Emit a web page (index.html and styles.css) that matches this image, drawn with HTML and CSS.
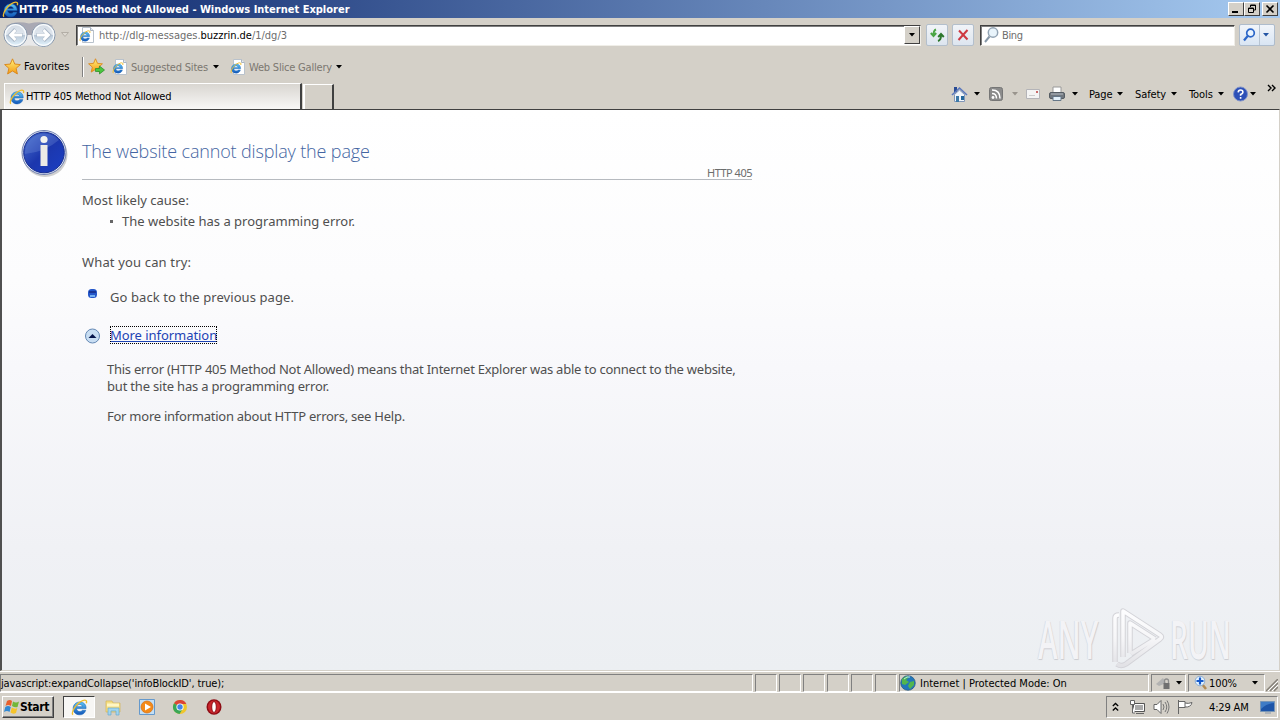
FILE: index.html
```html
<!DOCTYPE html>
<html lang="en">

<head>
    <meta charset="utf-8">
    <title>HTTP 405 Method Not Allowed</title>
    <link rel="stylesheet" href="styles.css">
</head>

<body>
    <!-- Shared icons -->
    <svg class="defs" width="0" height="0">
        <defs>
            <linearGradient id="blue" x2="0" y2="1">
                <stop stop-color="#5cc3f5" />
                <stop offset="1" stop-color="#1256b8" />
            </linearGradient>
            <linearGradient id="orb" x2="0" y2="1">
                <stop stop-color="#d3dbe4" />
                <stop offset=".48" stop-color="#dfe6ee" />
                <stop offset=".52" stop-color="#b9c8d8" />
                <stop offset="1" stop-color="#e6f6ff" />
            </linearGradient>
            <linearGradient id="gold" x2="0" y2="1">
                <stop stop-color="#fff27c" />
                <stop offset="1" stop-color="#f49a12" />
            </linearGradient>
            <linearGradient id="info" x2="1" y2="1">
                <stop stop-color="#4a72cf" />
                <stop offset=".5" stop-color="#1c37ad" />
                <stop offset="1" stop-color="#1b3fc4" />
            </linearGradient>
            <linearGradient id="mark" x2="0" y2="1">
                <stop stop-color="#fdfdfe" />
                <stop offset=".5" stop-color="#f6f6f8" />
                <stop offset="1" stop-color="#e2e2e6" />
            </linearGradient>
            <symbol id="ie" viewBox="0 0 16 16">
                <path d="M14.200 9H5.200c.2 2 1.400 2.800 3 2.800 1.200 0 2-.4 2.500-1.200h3.200C13 13.500 10.900 14.900 8.300 14.900 4.400 14.900 2 12.300 2 8.900S4.600 2.800 8.300 2.800s6.100 2.500 5.900 6.200zM5.300 7.200h5.400C10.500 5.900 9.500 5.200 8.100 5.200S5.600 5.900 5.300 7.200z" fill="url(#blue)" stroke="#1763b5" stroke-width=".5" />
                <path d="M1.800 14.800C-.2 12.500 5 4 11 1.500c3-1.100 4.200 0 3.400 2.500" fill="none" stroke="#f0bd2c" stroke-width="1.300" />
            </symbol>
            <symbol id="iepage" viewBox="0 0 16 16">
                <path d="M3.500.5h8l3 3v12h-11z" fill="#fff" stroke="#b9c2cc" />
                <path d="M11.500.5v3h3" fill="#e4eaf2" stroke="#aab4c0" />
                <use href="#ie" x="0" y="3" width="12" height="12" />
            </symbol>
            <symbol id="star" viewBox="0 0 16 16">
                <path d="M8 .8l2.100 4.900 5.300.5-4 3.500 1.200 5.300L8 12.200 3.400 15l1.200-5.300-4-3.500 5.300-.5z" fill="url(#gold)" stroke="#d9861b" stroke-width=".9" />
            </symbol>
            <symbol id="down" viewBox="0 0 7 4">
                <path d="M0 0h6L3 3.400z" fill="currentColor" />
            </symbol>
        </defs>
    </svg>

    <div class="window">
        <!-- Title bar -->
        <div class="titlebar">
            <svg class="title-icon"><use href="#ie" /></svg>
            <span class="title-text">HTTP 405 Method Not Allowed - Windows Internet Explorer</span>
            <div class="win-btn"><svg width="12" height="10"><path d="M2 7h6v2H2z" /></svg></div>
            <div class="win-btn"><svg width="12" height="10"><path d="M4.500 1h5v5H8M4.500 1v2M4 1.500h6" fill="none" stroke="#000" /><path d="M2.500 4h5v4.500h-5zM2 4.500h6" fill="none" stroke="#000" /></svg></div>
            <div class="win-btn close"><svg width="12" height="10"><path d="M2.500 1.500l7 7M9.500 1.500l-7 7" stroke="#000" stroke-width="1.600" /></svg></div>
        </div>

        <!-- Address row -->
        <div class="navbar">
            <svg class="orbs" width="58" height="28" viewBox="0 0 58 28">
                <path d="M6 5Q15-1 29 2.500 44-1 53 5L43 14H15z" fill="#a9a9b4" />
                <path d="M15 14h28v12Q29 23 15 26z" fill="#e9e9ea" />
                <g fill="url(#orb)" stroke="#8393a8">
                    <circle cx="15.500" cy="14" r="11.500" />
                    <circle cx="43.500" cy="14" r="11.500" />
                </g>
                <g fill="none" stroke="#f8fbfd" stroke-width="1.200">
                    <circle cx="15.500" cy="14" r="10.300" />
                    <circle cx="43.500" cy="14" r="10.300" />
                </g>
                <g fill="none" stroke="#a9b7c6" stroke-width="4">
                    <path d="M22.500 14H10M15.500 8.500L10 14l5.500 5.500" />
                    <path d="M36.500 14H49M43.500 8.500L49 14l-5.500 5.500" />
                </g>
                <g fill="none" stroke="#fff" stroke-width="2.800">
                    <path d="M22 14H10M15.500 9l-5 5 5 5" />
                    <path d="M37 14h12M43.500 9l5 5-5 5" />
                </g>
            </svg>
            <svg class="history" width="10" height="6"><path d="M1.500.5h7L5 4.500z" fill="#ddd9d2" stroke="#b3aea6" /></svg>
            <div class="address">
                <svg class="page-icon"><use href="#iepage" /></svg>
                <span class="url">http://dlg-messages.<b>buzzrin.de</b>/1/dg/3</span>
                <div class="drop-btn"><svg class="arrow"><use href="#down" /></svg></div>
            </div>
            <div class="tool-btn refresh">
                <svg width="16" height="16"><path d="M7 2.500Q4.500 3.500 4.500 8M1.800 6L4.500 9l2.700-3" fill="none" stroke="#4aa545" stroke-width="1.900" /><path d="M9 14q3-1 3-5.500M9.200 10L12 7l2.800 3" fill="none" stroke="#2c772c" stroke-width="1.900" /></svg>
            </div>
            <div class="tool-btn stop">
                <svg width="16" height="16"><path d="M4 3.500l8.500 9M12.500 3l-9 10" stroke="#ce3942" stroke-width="2" /></svg>
            </div>
            <div class="search">
                <svg width="18" height="18"><circle cx="10" cy="6.500" r="4.700" fill="#e9f4fb" stroke="#93a4b4" stroke-width="1.500" /><path d="M6.500 10.500L2 16" stroke="#8798a8" stroke-width="2" /></svg>
                <span>Bing</span>
            </div>
            <div class="search-btn">
                <div class="glass"><svg width="16" height="16"><circle cx="9.500" cy="6" r="3.800" fill="#e9f4ff" stroke="#2b66c8" stroke-width="1.700" /><path d="M6.700 9L3 13.500" stroke="#2b66c8" stroke-width="2.200" /></svg></div>
                <svg class="arrow"><use href="#down" /></svg>
            </div>
        </div>

        <!-- Favorites bar -->
        <div class="favbar">
            <svg class="i17"><use href="#star" /></svg>
            <span class="fav-label">Favorites</span>
            <i class="sep"></i>
            <svg class="i17" viewBox="0 0 17 17"><use href="#star" width="15" height="15" /><path d="M7.500 10.500h4V8l5 4-5 4v-2.500h-4z" fill="#4bc63f" stroke="#248924" stroke-width=".7" /></svg>
            <svg class="i16"><use href="#iepage" /></svg>
            <span class="suggested">Suggested Sites</span>
            <svg class="arrow"><use href="#down" /></svg>
            <svg class="i16 slice"><use href="#iepage" /></svg>
            <span class="gallery">Web Slice Gallery</span>
            <svg class="arrow"><use href="#down" /></svg>
        </div>

        <!-- Tabs and command bar -->
        <div class="tabbar">
            <div class="tab">
                <svg class="i16"><use href="#ie" /></svg>
                <span>HTTP 405 Method Not Allowed</span>
            </div>
            <div class="new-tab"></div>
            <div class="commands">
                <div class="cmd home">
                    <svg width="17" height="17"><path d="M3 1h3v5H3z" fill="#284a93" /><path d="M3.500 8.500L8.500 4l5 4.500v7h-10z" fill="#f2f6fb" stroke="#8297b8" /><path d="M1 9l7.500-7L16 9" fill="none" stroke="#5a78bd" stroke-width="1.600" /><path d="M5 10h3v6H5z" fill="#3d79a8" /><path d="M10 10h3v4h-3z" fill="#24679c" /></svg>
                    <svg class="arrow"><use href="#down" /></svg>
                </div>
                <div class="cmd feeds">
                    <svg width="15" height="15"><rect x=".5" y=".5" width="13" height="13" rx="2" fill="#8b8b8b" stroke="#767676" /><circle cx="4" cy="10.500" r="1.400" fill="#fff" /><path d="M3 6.500q4.500 0 4.500 5M3 3q8 0 8 8.500" fill="none" stroke="#fff" stroke-width="1.500" /></svg>
                    <svg class="arrow"><use href="#down" /></svg>
                </div>
                <div class="cmd mail">
                    <svg width="15" height="11"><path d="M.5.500h13v9H.5z" fill="#f4f4f4" stroke="#b4b4b8" /><path d="M10 2h2v2h-2z" fill="#c96a6a" /><path d="M3 6.500h6" stroke="#ccc" /></svg>
                </div>
                <div class="cmd print">
                    <svg width="17" height="16"><path d="M4 1h8v6H4z" fill="#fff" stroke="#999" /><rect x=".5" y="6.500" width="15" height="6" rx="1.500" fill="#71777e" stroke="#555c63" /><path d="M2 8h12" stroke="#b7bdc3" /><path d="M4 10.500h8v4H4z" fill="#e4f1fa" stroke="#678" /></svg>
                    <svg class="arrow"><use href="#down" /></svg>
                </div>
                <div class="cmd page"><span>Page</span><svg class="arrow"><use href="#down" /></svg></div>
                <div class="cmd safety"><span>Safety</span><svg class="arrow"><use href="#down" /></svg></div>
                <div class="cmd tools"><span>Tools</span><svg class="arrow"><use href="#down" /></svg></div>
                <div class="cmd help">
                    <svg width="16" height="16"><circle cx="7.500" cy="8" r="7" fill="#2d50b7" stroke="#7f92ca" /><path d="M5.200 6.400Q5.300 4 7.600 4t2.300 2.200Q9.900 7.500 7.600 8.500v1.300M7.600 11v1.700" fill="none" stroke="#fff" stroke-width="1.600" /></svg>
                    <svg class="arrow"><use href="#down" /></svg>
                </div>
                <svg class="more" width="10" height="8"><path d="M1 1l3 3-3 3M5 1l3 3-3 3" fill="none" stroke="#000" stroke-width="1.400" /></svg>
            </div>
        </div>

        <!-- Error page -->
        <div class="viewport">
            <svg class="info-icon" width="48" height="50" viewBox="0 0 48 50">
                <circle cx="24" cy="25.500" r="22.500" fill="#999" opacity=".45" />
                <circle cx="23" cy="23.500" r="22" fill="#dfe5f3" stroke="#6f7fae" />
                <circle cx="23" cy="23.500" r="20.300" fill="url(#info)" stroke="#162d90" />
                <path d="M4 25A19.500 19.500 0 0 1 38 11Q24 23 4 25z" fill="#88a5e4" opacity=".25" />
                <circle cx="23" cy="10.500" r="3.600" fill="#f3f3f0" />
                <path d="M19.500 16h7v21h-7z" fill="#eceae6" />
            </svg>
            <div class="error">
                <h1>The website cannot display the page</h1>
                <div class="code">HTTP 405</div>
                <p class="cause">Most likely cause:</p>
                <ul>
                    <li>The website has a programming error.</li>
                </ul>
                <p class="try">What you can try:</p>
                <div class="task">
                    <svg width="28" height="12"><rect x="6" y="1" width="9" height="9" rx="3.500" fill="#2457c9" /><path d="M7 4h7" stroke="#183494" stroke-width="2" /><path d="M8 8h5" stroke="#75b1f2" stroke-width="2" /></svg>
                    <span>Go back to the previous page.</span>
                </div>
                <div class="task info">
                    <svg width="28" height="18"><circle cx="10.500" cy="10" r="7" fill="#c9def3" stroke="#6488b4" /><path d="M6.500 12l4-4 4 4z" fill="#07154b" /></svg>
                    <a href="#">More information</a>
                </div>
                <div class="details">
                    <p class="line1">This error (HTTP 405 Method Not Allowed) means that Internet Explorer was able to connect to the website,</p>
                    <p class="line2">but the site has a programming error.</p>
                    <p class="line3">For more information about HTTP errors, see Help.</p>
                </div>
            </div>
            <!-- Watermark -->
            <div class="watermark">
                <span class="any">ANY</span>
                <svg width="58" height="64" viewBox="0 0 58 64">
                    <g fill="none" stroke-linejoin="round">
                        <path d="M7 55V11q0-3 4-3M15 50V4l37 24q3 2 0 4L18 57q-5 3-9 0M22 46V16l25 16M23 47l24-15" stroke="#d3d3d8" stroke-width="5.500" />
                        <path d="M7 55V11q0-3 4-3M15 50V4l37 24q3 2 0 4L18 57q-5 3-9 0M22 46V16l25 16M23 47l24-15" stroke="url(#mark)" stroke-width="3.500" />
                    </g>
                </svg>
                <span class="run">RUN</span>
            </div>
        </div>

        <!-- Status bar -->
        <div class="statusbar">
            <div class="pane msg"><span>javascript:expandCollapse('infoBlockID', true);</span></div>
            <div class="pane small"></div>
            <div class="pane small"></div>
            <div class="pane small"></div>
            <div class="pane small"></div>
            <div class="pane small"></div>
            <div class="pane small"></div>
            <div class="pane zone">
                <svg width="16" height="16"><circle cx="8" cy="8" r="7.300" fill="#2277ba" stroke="#28567d" stroke-width=".7" /><path d="M2 4q4-4 7-2L6 5l3 2-4 3-3-1zM10 7l4-1v4l-4 4-2-3z" fill="#52b64d" /><path d="M4 4q3-3 6-2" stroke="#b5e9f5" fill="none" /></svg>
                <span>Internet | Protected Mode: On</span>
            </div>
            <div class="pane lock">
                <svg width="17" height="16"><path d="M1 9l7-6 3 5-7 3z" fill="#b2b2b2" /><path d="M8.500 8h6v6h-6z" fill="#707070" /><path d="M9.500 8V6q0-2 2-2t2 2v2" fill="none" stroke="#8d8d8d" stroke-width="1.300" /></svg>
                <svg class="arrow"><use href="#down" /></svg>
            </div>
            <div class="pane zoom">
                <svg width="15" height="16"><path d="M8 9l4 5" stroke="#b38b54" stroke-width="2.500" /><circle cx="6" cy="6" r="4.800" fill="#e3f2ff" stroke="#8bacd0" /><path d="M6 2.500v7M2.500 6h7" stroke="#1559cb" stroke-width="2.200" /></svg>
                <span>100%</span>
                <svg class="arrow"><use href="#down" /></svg>
            </div>
            <svg class="grip" width="12" height="13"><path d="M0 12L12 0M4 12l8-8M8 12l4-4" stroke="#858078" stroke-width="1.500" /><path d="M2 12L12 2M6 12l6-6" stroke="#fff" /></svg>
        </div>

        <!-- Taskbar -->
        <div class="taskbar">
            <div class="start">
                <svg width="16" height="16"><path d="M3 2q3-2 5 0L7 7Q4 5 1.500 7z" fill="#e7602d" /><path d="M9 2.500q3 2 6 0L13.500 8Q11 9 8 7z" fill="#72b73a" /><path d="M1.300 8Q4 6 6.800 8L5.500 13Q3 11 0 13z" fill="#3189d3" /><path d="M7.800 8.500q3 2 5.500.5L12 14q-3 1.500-5.500-.5z" fill="#f6c42a" /></svg>
                <span>Start</span>
            </div>
            <div class="task-active"><svg width="17" height="17"><use href="#ie" /></svg></div>
            <svg class="launch" viewBox="0 0 17 17"><path d="M1 2h6l1 2h7v9H1z" fill="#f4dd83" stroke="#d4b653" stroke-width=".7" /><path d="M2 4.500h12v3H2z" fill="#fff6c4" /><path d="M3 16V9h11v7h-3v-4H6v4z" fill="#a0d5ef" stroke="#6ba9cd" stroke-width=".7" /></svg>
            <svg class="launch" viewBox="0 0 17 17"><path d="M.500.500h15v15H.5z" fill="#c3dff5" stroke="#6599cc" /><circle cx="8" cy="8" r="6" fill="#f48a18" stroke="#d56d10" stroke-width=".7" /><path d="M6 4.500l6 3.500-6 3.500z" fill="#fff" /></svg>
            <svg class="launch" viewBox="0 0 17 17"><circle cx="8" cy="8" r="7" fill="#efc62c" /><path d="M8 8L2 4.300A7 7 0 0 1 14.300 5H8z" fill="#db4437" /><path d="M2 4.300A7 7 0 0 0 7.500 15L11 9.500 8 8z" fill="#3aa757" /><circle cx="8" cy="8" r="3.600" fill="#fff" /><circle cx="8" cy="8" r="2.700" fill="#4285e8" /></svg>
            <svg class="launch" viewBox="0 0 17 17"><ellipse cx="8" cy="8" rx="7.500" ry="7.700" fill="#8e0c14" /><ellipse cx="8" cy="8" rx="6" ry="6.500" fill="#c9252b" /><ellipse cx="8" cy="8" rx="2.300" ry="5.500" fill="#fff" stroke="#900d14" /></svg>
            <div class="tray">
                <svg class="up" width="7" height="10"><path d="M.8 4L3.500 1.500 6.200 4M.8 8.500L3.500 6l2.700 2.500" fill="none" stroke="#000" stroke-width="1.300" /></svg>
                <svg class="net" width="17" height="16"><path d="M4.500 4.500h11v8h-11z" fill="#aaa" stroke="#555" /><path d="M5.500 5.500h9v6h-9z" fill="none" stroke="#fff" /><path d="M7 14.500h8" stroke="#666" /><path d="M1.500 1.500h4v4h-4zM3.500 6v8H6" fill="#fff" stroke="#666" /></svg>
                <svg class="vol" width="17" height="16"><path d="M1 5.500h3l4-4v13l-4-4H1z" fill="#fff" stroke="#666" /><path d="M10 5q2 3 0 6M12 3q3.500 5 0 10M14 1.500q4 6.500 0 13" fill="none" stroke="#777" /></svg>
                <svg class="flag" width="17" height="16"><path d="M1.500 1v14M2 2.500h6v6H2M8 4q3 1 7-.5-1 5-7 4.500" fill="#fff" stroke="#666" /></svg>
                <span class="clock">4:29 AM</span>
                <svg class="desk" width="16" height="14"><path d="M.500 1.500h14v10H.5z" fill="#1d55a8" stroke="#7896b6" /><path d="M1 9Q7 3 14 3V2H1z" fill="#3f7cc6" /><path d="M5 13h6" stroke="#8897aa" /></svg>
            </div>
        </div>
    </div>
</body>

</html>
```
FILE: styles.css
```css
/* Base */
* {
    box-sizing: border-box;
}
body {
    margin: 0;
    overflow: hidden;
    background: #d4d0c8;
    color: #000;
    font-family: "DejaVu Sans Condensed", "DejaVu Sans", sans-serif;
    font-size: 11px;
    font-stretch: condensed;
    letter-spacing: -0.35px;
}
svg {
    display: block;
    flex: none;
}
span {
    white-space: nowrap;
}
.defs {
    position: absolute;
}
.window {
    display: flex;
    flex-direction: column;
    width: 1280px;
    height: 720px;
}
.arrow {
    width: 7px;
    height: 4px;
}
.i16 {
    width: 16px;
    height: 16px;
}
.i17 {
    width: 17px;
    height: 17px;
}

/* Title bar */
.titlebar {
    display: flex;
    align-items: center;
    height: 18px;
    padding-right: 2px;
    background: linear-gradient(to right, #0a246a, #a6caf0);
    color: #fff;
}
.title-icon {
    width: 17px;
    height: 17px;
    margin-left: 2px;
}
.title-text {
    flex: 1;
    font-weight: bold;
    letter-spacing: 0;
}
.win-btn {
    width: 16px;
    height: 14px;
    padding: 1px;
    background: #d4d0c8;
    border: 1px solid;
    border-color: #fff #404040 #404040 #fff;
}
.win-btn.close {
    margin-left: 2px;
}

/* Address row */
.navbar {
    display: flex;
    align-items: center;
    height: 34px;
}
.orbs {
    width: 58px;
}
.history {
    margin: 0 8px 0 2px;
}
.address,
.search {
    display: flex;
    align-items: center;
    height: 21px;
    background: #fff;
    border: 1px solid;
    border-color: #404040 #f0eee8 #f0eee8 #404040;
    box-shadow: inset 1px 1px #808080;
    color: #6d6d6d;
}
.address {
    width: 845px;
    margin-left: -2px;
}
.page-icon {
    width: 16px;
    height: 16px;
    margin: 0 4px 0 2px;
}
.url {
    flex: 1;
    padding-top: 1px;
    letter-spacing: -0.02px;
}
.url b {
    color: #000;
    font-weight: normal;
}
.drop-btn {
    display: flex;
    align-items: center;
    justify-content: center;
    width: 16px;
    height: 18px;
    background: #d4d0c8;
    border: 1px solid;
    border-color: #fff #404040 #404040 #fff;
    color: #000;
}
.tool-btn {
    display: flex;
    align-items: center;
    justify-content: center;
    width: 22px;
    height: 22px;
    margin-left: 5px;
    background: linear-gradient(#f1f4f8, #dde5ef);
    border: 1px solid #b3bfcc;
    border-radius: 2px;
}
.stop {
    margin-left: 4px;
}
.search {
    width: 255px;
    margin-left: 6px;
    padding-left: 2px;
}
.search svg {
    margin-right: 1px;
}
.search span {
    padding-top: 1px;
}
.search-btn {
    display: flex;
    align-items: center;
    width: 36px;
    height: 22px;
    margin-left: 4px;
    background: linear-gradient(#f1f5fa, #d9e5f3);
    border: 1px solid #aebccc;
    border-radius: 2px;
    color: #2355a4;
}
.glass {
    padding: 2px 2px 2px 1px;
    margin-right: 3px;
    border-right: 1px solid #b8c5d3;
}

/* Favorites bar */
.favbar {
    display: flex;
    align-items: center;
    height: 29px;
    padding-left: 4px;
}
.fav-label {
    width: 59px;
    padding-left: 3px;
    letter-spacing: 0.1px;
}
.sep {
    width: 2px;
    height: 20px;
    margin: 0 4px 0 2px;
    border-left: 1px solid #808080;
    border-right: 1px solid #fff;
}
.favbar .i16 {
    margin: 0 3px 0 7px;
}
.favbar .i16.slice {
    margin-left: 10px;
}
.suggested,
.gallery {
    width: 82px;
    padding-top: 1px;
    color: #7b7770;
    letter-spacing: -0.2px;
}
.gallery {
    width: 87px;
}

/* Tabs and command bar */
.tabbar {
    display: flex;
    align-items: flex-end;
    height: 28px;
    padding-left: 4px;
}
.tab {
    display: flex;
    align-items: center;
    width: 298px;
    height: 26px;
    padding-left: 4px;
    background: linear-gradient(#d9d6d1, #f8f7f6);
    border-top: 1px solid #fff;
    border-left: 1px solid #fff;
    border-right: 2px solid #404040;
}
.tab span {
    padding-left: 1px;
    letter-spacing: -0.17px;
}
.new-tab {
    width: 31px;
    height: 25px;
    margin-left: 1px;
    border-top: 1px solid #fff;
    border-left: 2px solid #fff;
    border-right: 2px solid #404040;
}
.commands {
    display: flex;
    align-items: center;
    height: 30px;
    margin-left: 617px;
}
.cmd {
    display: flex;
    align-items: center;
    justify-content: space-between;
}
.cmd span {
    letter-spacing: -0.1px;
}
.home {
    width: 30px;
}
.feeds {
    width: 30px;
    margin-left: 8px;
}
.feeds .arrow {
    color: #99948d;
}
.mail {
    margin-left: 7px;
}
.print {
    width: 30px;
    margin-left: 8px;
}
.page {
    width: 35px;
    margin-left: 10px;
}
.safety {
    width: 43px;
    margin-left: 11px;
}
.tools {
    width: 36px;
    margin-left: 11px;
}
.help {
    width: 24px;
    margin-left: 8px;
}
.more {
    margin: -12px 0 0 10px;
}

/* Error page */
.viewport {
    position: relative;
    display: flex;
    height: 562px;
    padding: 19px 0 0 19px;
    background: linear-gradient(#fff 0%, #fcfcfd 30%, #f8f8fb 46%, #f0f1f5 78%, #eceff2 100%);
    border: 1px solid #d4d0c8;
    border-top: 1px solid #404040;
    border-left: 2px solid #505050;
    color: #4f4f4f;
    font-family: "Noto Sans", "Open Sans", sans-serif;
    font-size: 13px;
    font-stretch: normal;
    letter-spacing: 0;
}
.info-icon {
    margin-right: 13px;
}
.error {
    width: 670px;
}
h1 {
    margin: 7px 0 0;
    color: #4465a2;
    font-family: "Open Sans", "Noto Sans", sans-serif;
    font-size: 18px;
    font-weight: 300;
    letter-spacing: -0.15px;
    line-height: 30px;
}
.code {
    height: 14px;
    border-bottom: 1px solid #b6babf;
    color: #6d6d6d;
    font-size: 11px;
    letter-spacing: -0.5px;
    line-height: 14px;
    text-align: right;
}
.error p,
ul {
    margin: 0;
    line-height: 18px;
}
.error .cause {
    margin-top: 11px;
}
ul {
    margin-top: 3px;
    padding-left: 28px;
    list-style: none;
}
li {
    display: flex;
    align-items: center;
}
li::before {
    content: "";
    width: 3px;
    height: 3px;
    margin-right: 9px;
    background: #666;
}
.error .try {
    margin-top: 23px;
    letter-spacing: 0.15px;
}
.task {
    display: flex;
    align-items: flex-start;
    margin-top: 17px;
    letter-spacing: 0.08px;
    line-height: 18px;
}
.task.info {
    align-items: center;
    margin-top: 20px;
    letter-spacing: -0.05px;
}
.task a {
    outline: 1px dotted #000;
    outline-offset: -1px;
    color: #1d43b4;
}
.details {
    padding: 17px 0 0 25px;
    letter-spacing: -0.25px;
    white-space: nowrap;
}
.error .details p {
    line-height: 17px;
}
.error .details .line2 {
    letter-spacing: -0.19px;
}
.error .details .line3 {
    margin-top: 13px;
}
.watermark {
    position: absolute;
    right: 44px;
    bottom: -1px;
    display: flex;
    align-items: center;
    width: 197px;
    color: #f3f3f6;
    font-family: "Open Sans", sans-serif;
    font-size: 53px;
    font-weight: 600;
    line-height: 64px;
    text-shadow: 1px 1px 1px #cbccd1, -1px 0 1px #d7d8dd;
}
.watermark span {
    width: 66px;
    transform: scaleX(.56);
    transform-origin: left;
}
.watermark .run {
    transform: scaleX(.53);
}
.watermark svg {
    margin: 0 4px;
}

/* Status bar */
.statusbar {
    display: flex;
    height: 22px;
    padding-top: 2px;
    border-top: 1px solid #fff;
    border-bottom: 1px solid #fff;
}
.pane {
    display: flex;
    align-items: center;
    height: 18px;
    margin-right: 2px;
    border: 1px solid;
    border-color: #808080 #fff #fff #808080;
}
.msg {
    width: 753px;
    letter-spacing: -0.13px;
}
.small {
    width: 22px;
}
.zone {
    width: 250px;
    letter-spacing: 0;
}
.zone span {
    margin-left: 4px;
}
.lock {
    width: 35px;
    padding-left: 3px;
}
.lock .arrow {
    margin-left: 4px;
}
.zoom {
    width: 77px;
    padding-left: 5px;
}
.zoom span {
    width: 43px;
    letter-spacing: -0.1px;
}
.grip {
    margin: 5px 0 0 -1px;
}

/* Taskbar */
.taskbar {
    display: flex;
    align-items: center;
    height: 27px;
    padding: 1px 0 0 2px;
}
.start {
    display: flex;
    align-items: center;
    width: 52px;
    height: 22px;
    padding-left: 1px;
    border: 1px solid;
    border-color: #fff #404040 #404040 #fff;
    box-shadow: inset -1px -1px #808080;
    font-size: 12px;
    font-weight: bold;
}
.task-active {
    display: flex;
    align-items: center;
    justify-content: center;
    width: 32px;
    height: 22px;
    margin: 0 10px 0 9px;
    background: #f7f6f4;
    border: 1px solid;
    border-color: #404040 #fff #fff #404040;
}
.launch {
    width: 17px;
    height: 17px;
    margin-right: 16.7px;
}
.tray {
    display: flex;
    align-items: center;
    width: 172px;
    height: 22px;
    margin-left: auto;
    margin-right: 2px;
    border: 1px solid;
    border-color: #808080 #fff #fff #808080;
}
.up {
    margin: 0 10px 0 5px;
}
.vol {
    margin: 0 7px 0 7px;
}
.clock {
    width: 51px;
    margin-left: 15px;
    letter-spacing: -0.15px;
}
```
